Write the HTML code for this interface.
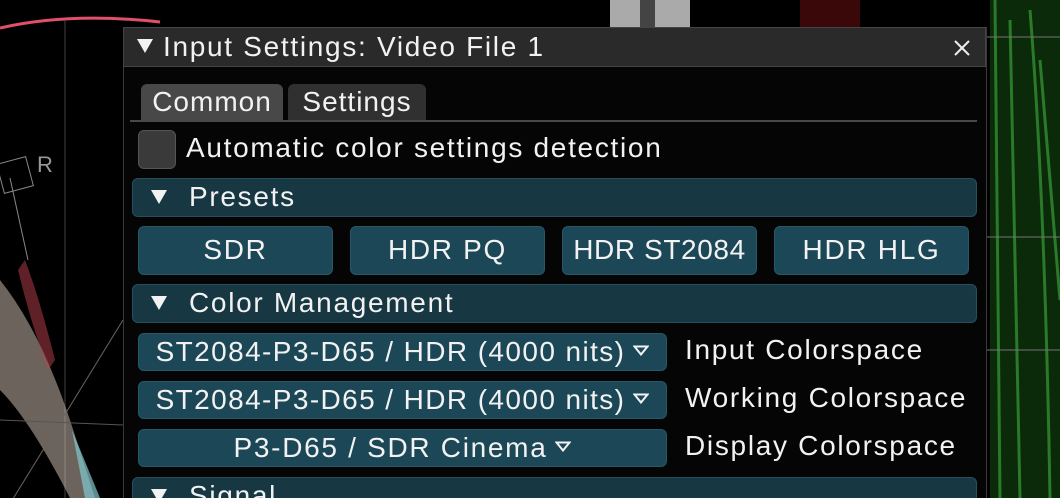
<!DOCTYPE html>
<html><head><style>
html,body{margin:0;width:1060px;height:498px;overflow:hidden}
body{background:#000;font-family:"Liberation Sans",sans-serif;color:#f2f2f2;position:relative;letter-spacing:1.7px}
.a{position:absolute}
.win{left:123px;top:27px;width:862px;height:471px;background:#050505;border:1px solid #3a3a3a;border-bottom:none}
.title{left:123px;top:27px;width:861px;height:38px;background:#2a2a2a;border:1px solid #444;font-size:28px;line-height:38px}
.tab{top:84px;height:36px;font-size:28px;line-height:36px;border-radius:6px 6px 0 0;text-align:center}
.hdr{left:132px;width:843px;height:37px;background:#173843;border:1px solid #24505e;border-radius:6px;font-size:28px;line-height:36px}
.btn{top:226px;width:195px;height:49px;background:#1c4757;border:1px solid #275868;border-radius:6px;box-sizing:border-box;font-size:28px;line-height:46px;text-align:center}
.cb{left:138px;width:529px;height:38px;background:#1c4757;border:1px solid #275868;border-radius:6px;box-sizing:border-box;font-size:28px;line-height:35px;text-align:center;white-space:nowrap}
.lbl{left:685px;font-size:28px;line-height:38px}
.tri{display:inline-block;width:0;height:0;border-left:8px solid transparent;border-right:8px solid transparent;border-top:14px solid #f2f2f2;margin-right:22px;vertical-align:middle;position:relative;top:-2px}
.dd{display:inline-block;width:16px;height:11px;vertical-align:middle;margin-left:8px;position:relative;top:-3px}
</style></head><body>
<svg class="a" style="left:0;top:0" width="1060" height="498">
<path d="M0 28 Q70 12 160 22" stroke="#e0506a" stroke-width="3" fill="none"/>
<line x1="65" y1="20" x2="65" y2="498" stroke="#444" stroke-width="1"/>
<rect x="0" y="160" width="30" height="30" fill="none" stroke="#888" transform="rotate(-15 15 175)"/>
<text x="37" y="172" fill="#999" font-size="22" font-family="Liberation Sans">R</text>
<line x1="10" y1="178" x2="28" y2="260" stroke="#888"/>
<path d="M0 280 Q40 330 70 420 L95 498 L70 498 Q30 420 0 390Z" fill="#d8c8b8" opacity="0.5"/>
<path d="M25 260 Q40 300 55 360 L48 370 Q30 320 18 270Z" fill="#c04050" opacity="0.5"/>
<path d="M72 430 L100 498 L85 498Z" fill="#80c8d0" opacity="0.7"/>
<line x1="0" y1="520" x2="123" y2="320" stroke="#666"/>
<line x1="0" y1="420" x2="123" y2="425" stroke="#555"/>
<rect x="610" y="0" width="80" height="27" fill="#aaa"/>
<rect x="640" y="0" width="15" height="27" fill="#444"/>
<rect x="800" y="0" width="60" height="27" fill="#3a0808"/>
<rect x="990" y="0" width="70" height="498" fill="#0a2a0a"/>
<path d="M995 0 L1000 498 M1010 20 L1020 498 M1030 10 Q1045 200 1050 498 M1040 60 L1060 300" stroke="#2a7a2a" stroke-width="3" fill="none"/>
<line x1="985" y1="37" x2="1060" y2="37" stroke="#777"/>
<line x1="985" y1="237" x2="1060" y2="237" stroke="#777"/>
<line x1="985" y1="350" x2="1060" y2="350" stroke="#777"/>
</svg>
<div class="a win"></div>
<div class="a title"><span class="tri" style="margin-left:13px;margin-right:10px;top:-3px"></span>Input Settings: Video File 1
<svg class="a" style="left:829px;top:11px" width="18" height="18"><path d="M2 2L16 16M16 2L2 16" stroke="#eee" stroke-width="2"/></svg></div>
<div class="a tab" style="left:141px;width:142px;background:#484848;letter-spacing:1px">Common</div>
<div class="a tab" style="left:288px;width:138px;background:#303030;letter-spacing:1px">Settings</div>
<div class="a" style="left:130px;top:120px;width:847px;height:2px;background:#484848"></div>
<div class="a" style="left:138px;top:130px;width:38px;height:39px;background:#3a3a3a;border:1px solid #555;border-radius:6px;box-sizing:border-box"></div>
<div class="a" style="left:186px;top:128px;font-size:28px;line-height:40px">Automatic color settings detection</div>
<div class="a hdr" style="top:178px"><span class="tri" style="margin-left:18px"></span>Presets</div>
<div class="a btn" style="left:138px">SDR</div>
<div class="a btn" style="left:350px">HDR PQ</div>
<div class="a btn" style="left:562px;letter-spacing:0.6px">HDR ST2084</div>
<div class="a btn" style="left:774px">HDR HLG</div>
<div class="a hdr" style="top:284px"><span class="tri" style="margin-left:18px"></span>Color Management</div>
<div class="a cb" style="top:333px;letter-spacing:1.4px">ST2084-P3-D65 / HDR (4000 nits)<svg class="dd" viewBox="0 0 16 11"><path d="M1.5 1.5H14.5L8 9.5Z" fill="none" stroke="#f2f2f2" stroke-width="2"/></svg></div>
<div class="a cb" style="top:381px;letter-spacing:1.4px">ST2084-P3-D65 / HDR (4000 nits)<svg class="dd" viewBox="0 0 16 11"><path d="M1.5 1.5H14.5L8 9.5Z" fill="none" stroke="#f2f2f2" stroke-width="2"/></svg></div>
<div class="a cb" style="top:429px">P3-D65 / SDR Cinema<svg class="dd" viewBox="0 0 16 11"><path d="M1.5 1.5H14.5L8 9.5Z" fill="none" stroke="#f2f2f2" stroke-width="2"/></svg></div>
<div class="a lbl" style="top:331px">Input Colorspace</div>
<div class="a lbl" style="top:379px">Working Colorspace</div>
<div class="a lbl" style="top:427px">Display Colorspace</div>
<div class="a hdr" style="top:477px;height:40px"><span class="tri" style="margin-left:18px"></span>Signal</div>
</body></html>
